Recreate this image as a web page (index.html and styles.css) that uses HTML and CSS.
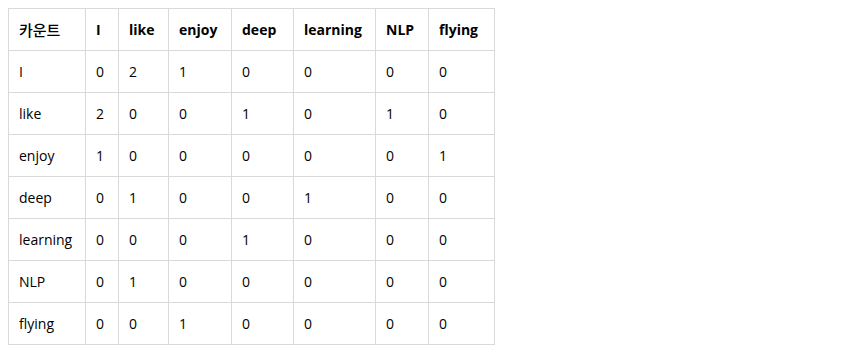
FILE: index.html
```html
<!DOCTYPE html>
<html lang="ko">
<head>
<meta charset="utf-8">
<link rel="stylesheet" href="styles.css">
</head>
<body>
<table class="matrix">
  <colgroup>
    <col class="c0"><col class="c1"><col class="c2"><col class="c3"><col class="c4"><col class="c5"><col class="c6"><col class="c7">
  </colgroup>
  <thead>
    <tr><th class="label">카운트</th><th>I</th><th>like</th><th>enjoy</th><th>deep</th><th>learning</th><th>NLP</th><th>flying</th></tr>
  </thead>
  <tbody>
    <tr><td>I</td><td>0</td><td>2</td><td>1</td><td>0</td><td>0</td><td>0</td><td>0</td></tr>
    <tr><td>like</td><td>2</td><td>0</td><td>0</td><td>1</td><td>0</td><td>1</td><td>0</td></tr>
    <tr><td>enjoy</td><td>1</td><td>0</td><td>0</td><td>0</td><td>0</td><td>0</td><td>1</td></tr>
    <tr><td>deep</td><td>0</td><td>1</td><td>0</td><td>0</td><td>1</td><td>0</td><td>0</td></tr>
    <tr><td>learning</td><td>0</td><td>0</td><td>0</td><td>1</td><td>0</td><td>0</td><td>0</td></tr>
    <tr><td>NLP</td><td>0</td><td>1</td><td>0</td><td>0</td><td>0</td><td>0</td><td>0</td></tr>
    <tr><td>flying</td><td>0</td><td>0</td><td>1</td><td>0</td><td>0</td><td>0</td><td>0</td></tr>
  </tbody>
</table>
</body>
</html>
```
FILE: styles.css
```css
html, body {
  margin: 0;
  background: #ffffff;
}
body {
  padding: 8px;
  font-family: "Open Sans", "Noto Sans CJK KR", sans-serif;
  font-size: 14px;
  color: #000000;
}
.matrix {
  border-collapse: collapse;
  table-layout: fixed;
  width: 486px;
}
.matrix th,
.matrix td {
  border: 1px solid #d9d9d9;
  padding: 10px 10px;
  line-height: 21px;
  text-align: left;
  white-space: nowrap;
  font-size: 14px;
}
.matrix th {
  font-weight: 700;
}
.matrix th.label {
  font-family: "Noto Sans CJK KR", sans-serif;
  font-size: 15px;
  font-weight: 500;
}
.c0 { width: 77px; }
.c1 { width: 33px; }
.c2 { width: 50px; }
.c3 { width: 63px; }
.c4 { width: 62px; }
.c5 { width: 82px; }
.c6 { width: 53px; }
.c7 { width: 66px; }
```
